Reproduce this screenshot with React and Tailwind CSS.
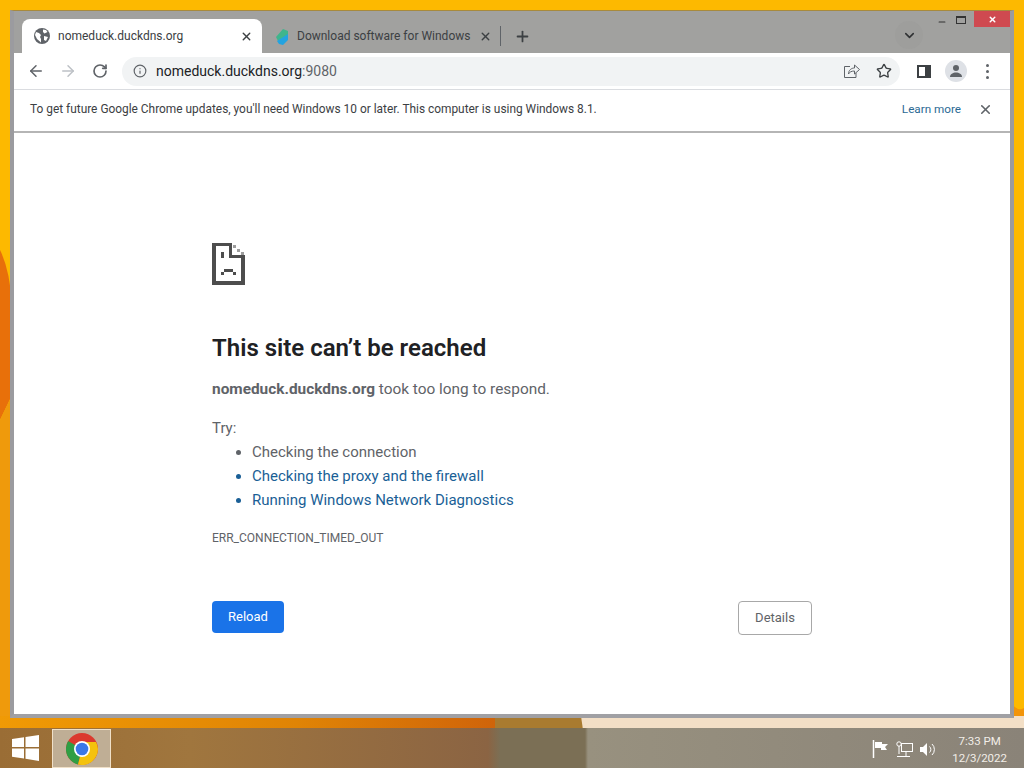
import React from "react";
import { ArrowLeft, ArrowRight, RotateCw, Info, Star, X, Plus, ChevronDown, Minus } from "lucide-react";

function Globe() {
  return (
    <svg className="shrink-0" width="16" height="16" viewBox="0 0 16 16">
      <circle cx="8" cy="8" r="8" fill="#5f6368" />
      <path d="M2 4l3 1 2 2-1 2 1 2v3.500L3 11 1 7z M9 1.500l3 .5 1.500 2-3 1.500L9 4z M10 8l4 1-2 4-2-1z" fill="#fff" />
    </svg>
  );
}

function Favicon() {
  return (
    <svg className="shrink-0" width="14" height="17" viewBox="0 0 14 17">
      <path d="M1 9 8 1l5 2v4L3 13z" fill="#3fb58c" />
      <path d="M2 13 13 6v6l-5 5-4-1z" fill="#23a3e0" />
    </svg>
  );
}

function SadFile() {
  return (
    <svg width="33" height="42" viewBox="0 0 34 43" shapeRendering="crispEdges" fill="#4d4d4d">
      <path d="M0 0h19v3H4v36h26V15h4v28H0z" />
      <path d="M18 0h3v12h13v3H18z" />
      <path d="M22 2h3v3h-3z M26 6h3v3h-3z M30 9h3v3h-3z" opacity=".55" />
      <rect x="9" y="9" width="3" height="6" />
      <rect x="12" y="27" width="10" height="3" />
      <rect x="9" y="30" width="3" height="3" />
      <rect x="22" y="30" width="3" height="3" />
    </svg>
  );
}

function ChromeLogo() {
  return (
    <svg width="32" height="32" viewBox="0 0 32 32">
      <circle cx="16" cy="16" r="16" fill="#db3a2e" />
      <path d="M16 16 2.100 8A16 16 0 0 0 12 31.500z" fill="#2f9e44" />
      <path d="M16 16H32A16 16 0 0 1 12 31.500L16 16zM16 9h14A16 16 0 0 1 32 16H16z" fill="#f4c20d" />
      <circle cx="16" cy="16" r="8" fill="#fff" />
      <circle cx="16" cy="16" r="6.300" fill="#3b78e7" />
    </svg>
  );
}

function WinLogo() {
  return (
    <svg width="27" height="26" viewBox="0 0 27 26" fill="#fff">
      <path d="M0 4l12-1.800V12H0z M13.500 2 27 0v12H13.500z M0 13.500h12v10L0 21.800z M13.500 13.500H27V26l-13.500-2.200z" />
    </svg>
  );
}

function Tray() {
  return (
    <div className="flex items-center gap-[7px] mt-[2px]">
      <svg width="17" height="18" viewBox="0 0 17 18" fill="none">
        <path d="M1.500 0v18" stroke="#fff" strokeWidth="1.500" />
        <path d="M3 2h7v2h6l-3 3 2 3H9V8H3z" fill="#fff" />
      </svg>
      <svg width="17" height="16" viewBox="0 0 17 16" fill="none" stroke="#fff">
        <rect x="5.500" y="2.500" width="11" height="8" />
        <circle cx="3" cy="3" r="2.200" fill="#8a8074" />
        <path d="M3 5v8 M1 15.500h13 M10 11v4" />
      </svg>
      <svg width="17" height="15" viewBox="0 0 17 15" fill="none">
        <path d="M0 5h3l4-4v13l-4-4H0z" fill="#fff" />
        <path d="M9.500 4.500a4 4 0 0 1 0 6 M12 2a7.500 7.500 0 0 1 0 11" stroke="#fff" />
      </svg>
    </div>
  );
}

export default function App() {
  return (
    <div className="relative w-[1024px] h-[768px] overflow-hidden flex flex-col font-['Roboto',sans-serif]">
      {/* wallpaper */}
      <svg className="absolute inset-0" width="1024" height="768" viewBox="0 0 1024 768">
        <defs>
          <linearGradient id="strip" x1="0" x2="1" y1="0" y2="0">
            <stop offset="0" stopColor="#f09a05" />
            <stop offset="0.6" stopColor="#e08405" />
            <stop offset="1" stopColor="#d0640a" />
          </linearGradient>
        </defs>
        <rect width="1024" height="768" fill="#fdb900" />
        <path d="M0 250Q10 270 12 305V395L0 420z" fill="#e8700a" />
        <path d="M0 420 12 395V720H0z" fill="#ef9a0c" />
        <rect y="716" width="495" height="14" fill="url(#strip)" />
        <rect x="495" y="716" width="90" height="14" fill="#a97b30" />
        <path d="M583 730 581 716H1024V730z" fill="#f3dfc6" />
        <path d="M1012 704Q1018 712 1024 708V716H1012z" fill="#f2950a" />
      </svg>

      <div className="relative flex-1 pt-[10px] px-[10px] pb-[10px]">
        {/* browser window */}
        <div className="h-full flex flex-col bg-[#a1a19f] border-t border-[#a88a3c] border-x-[4px] border-x-[#9b9b9f] border-b-[4px] border-b-[#a0a0a4]">
          {/* tab strip */}
          <div className="relative h-[42px] flex items-end pl-[8px] shrink-0">
            <div className="w-[240px] h-[34px] bg-white rounded-t-[8px] flex items-center pl-[12px] pr-[9px] text-[#3c4043]">
              <Globe />
              <span className="ml-[8px] text-[12px]">nomeduck.duckdns.org</span>
              <X className="ml-auto" size={13} strokeWidth={2.500} />
            </div>
            <div className="h-[34px] flex items-center pl-[13px] text-[#3c4043]">
              <Favicon />
              <span className="ml-[8px] w-[172px] text-[12px] whitespace-nowrap">Download software for Windows</span>
              <X className="ml-[10px] shrink-0" size={13} strokeWidth={2.500} />
              <div className="ml-[8px] w-px h-[20px] bg-[#5f6368] shrink-0" />
              <Plus className="ml-[13px] shrink-0" size={17} strokeWidth={2.500} />
            </div>
            <div className="absolute right-[87px] top-[10px] w-[28px] h-[28px] rounded-full bg-[#9e9e9c] flex items-center justify-center text-[#2f3133]">
              <ChevronDown size={15} strokeWidth={2.500} />
            </div>
            {/* window controls */}
            <div className="absolute top-0 right-0 flex items-start text-[#333]">
              <Minus className="mt-[6px]" size={10} strokeWidth={2.500} />
              <div className="ml-[9px] mt-[5px] w-[10px] h-[8px] border border-[#333] border-t-[2px]" />
              <div className="ml-[8px] w-[36px] h-[16px] bg-[#cf4a50] flex items-center justify-center text-white">
                <X size={9} strokeWidth={4} />
              </div>
            </div>
          </div>

          {/* toolbar */}
          <div className="h-[37px] bg-white flex items-center pl-[13px] border-b border-[#dadce0] shrink-0 text-[#5f6368]">
            <ArrowLeft size={18} strokeWidth={2} />
            <ArrowRight className="ml-[14px] text-[#bdc1c6]" size={18} strokeWidth={2} />
            <RotateCw className="ml-[15px]" size={16} strokeWidth={2.500} />
            <div className="ml-[14px] w-[778px] h-[29px] bg-[#f1f3f4] rounded-full flex items-center pl-[11px] pr-[8px]">
              <Info size={14} strokeWidth={2} />
              <span className="ml-[9px] text-[14px] text-[#202124]">
                nomeduck.duckdns.org<span className="text-[#5f6368]">:9080</span>
              </span>
              <svg className="ml-auto" width="16" height="14" viewBox="0 0 16 14" fill="none" stroke="#5f6368">
                <path d="M6 2.500H.5v11H12V9 M4.500 10c0-4 3-6 6-6V1l5 4.500-5 4.500V7c-3 0-5 1-6 3z" />
              </svg>
              <Star className="ml-[16px]" size={16} strokeWidth={2} color="#3c4043" />
            </div>
            <div className="ml-[17px] w-[14px] h-[13px] border-2 border-[#3c4043] border-r-[6px]" />
            <div className="ml-[14px] w-[22px] h-[22px] rounded-full bg-[#dee1e6] flex items-center justify-center">
              <svg width="14" height="14" viewBox="0 0 14 14" fill="#5f6368">
                <circle cx="7" cy="4" r="3" />
                <path d="M1 13c0-3 3-4.500 6-4.500s6 1.500 6 4.500z" />
              </svg>
            </div>
            <div className="ml-[19px] flex flex-col gap-[3px]">
              <div className="w-[3px] h-[3px] rounded-full bg-[#5f6368]" />
              <div className="w-[3px] h-[3px] rounded-full bg-[#5f6368]" />
              <div className="w-[3px] h-[3px] rounded-full bg-[#5f6368]" />
            </div>
          </div>

          {/* update infobar */}
          <div className="h-[43px] bg-white flex items-center pl-[16px] pr-[17px] pb-[2px] border-b-2 border-[#b5b5b5] shrink-0">
            <span className="text-[11.900px] text-[#3c4043]">
              To get future Google Chrome updates, you'll need Windows 10 or later. This computer is using Windows 8.1.
            </span>
            <span className="ml-auto text-[11.700px] text-[#2b6a94]">Learn more</span>
            <X className="ml-[17px] text-[#5f6368]" size={15} strokeWidth={2.500} />
          </div>

          {/* error page */}
          <div className="flex-1 bg-white px-[198px] pt-[110px]">
            <SadFile />
            <h1 className="mt-[47px] text-[24px] leading-[32px] font-semibold text-[#202124]">This site can’t be reached</h1>
            <p className="mt-[13px] text-[15.400px] leading-[24px] text-[#5f6368]">
              <b className="font-bold">nomeduck.duckdns.org</b> took too long to respond.
            </p>
            <p className="mt-[15px] text-[15px] leading-[24px] text-[#5f6368]">Try:</p>
            <ul className="list-disc pl-[40px] text-[15px] leading-[24px] text-[#5f6368]">
              <li>Checking the connection</li>
              <li className="text-[#1a5f96]"><span>Checking the proxy and the firewall</span></li>
              <li className="text-[#1a5f96]"><span>Running Windows Network Diagnostics</span></li>
            </ul>
            <p className="mt-[14px] text-[12px] leading-[24px] text-[#5f6368]">ERR_CONNECTION_TIMED_OUT</p>
            <div className="mt-[51px] flex items-start justify-between text-[13px]">
              <button className="w-[72px] h-[32px] rounded-[4px] bg-[#1a73e8] text-white">Reload</button>
              <button className="w-[74px] h-[34px] rounded-[4px] border border-[#a8a8a8] bg-white text-[#5f6368]">Details</button>
            </div>
          </div>
        </div>
      </div>

      {/* taskbar */}
      <div className="relative h-[40px] shrink-0 flex items-center bg-[linear-gradient(to_right,#9a6d35_0px,#a0763e_190px,#8b6443_488px,#7b6f55_500px,#7b6f55_585px,#98917f_588px,#8a8378_1024px)]">
        <div className="ml-[12px]"><WinLogo /></div>
        <div className="ml-[13px] w-[59px] h-[39px] mt-[1px] bg-[#bfae95] border border-[#f0e0c8] flex items-center justify-center">
          <ChromeLogo />
        </div>
        <div className="ml-auto flex items-center pr-[17px]">
          <Tray />
          <div className="ml-[15px] mt-[3px] flex flex-col items-center text-[11.500px] leading-[17px] text-[#f2eee8]">
            <span>7:33 PM</span>
            <span>12/3/2022</span>
          </div>
        </div>
      </div>
    </div>
  );
}
